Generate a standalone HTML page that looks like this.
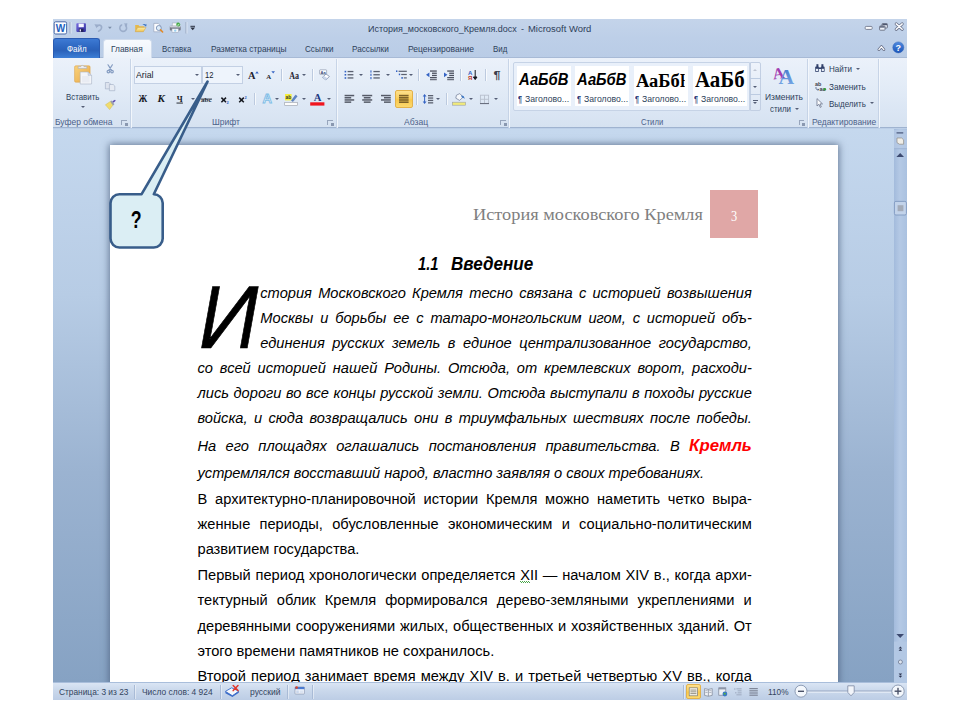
<!DOCTYPE html>
<html lang="ru"><head><meta charset="utf-8"><title>История московского Кремля</title>
<style>
*{box-sizing:border-box;margin:0;padding:0}
html,body{width:960px;height:720px;background:#fff;overflow:hidden}
body{position:relative;font-family:"Liberation Sans",sans-serif;color:#2e3f5b}
body div,body span,body svg,body b{position:absolute}
.ln b,.ln span{position:static}
.t{white-space:pre;transform-origin:0 50%}
.gl{color:#4c6189}
.st{color:#33445e}
#win{left:53px;top:19px;width:854px;height:681px;background:#bccfe8;overflow:hidden}
#title{left:53px;top:19px;width:854px;height:39px;background:linear-gradient(#c4d4ea 0,#bdcfe8 50%,#b9cce6 100%)}
#filetab{left:53px;top:38px;width:46.8px;height:20px;border-radius:3px 3px 0 0;background:linear-gradient(#3d7ad4 0,#2e68c2 40%,#2a61b9 60%,#3c7ed6 100%);border:1px solid #2b5cb2;border-bottom:none}
#hometab{left:102.6px;top:38.6px;width:49.2px;height:19.8px;border-radius:3.5px 3.5px 0 0;background:linear-gradient(#f7fafe,#ecf2fa);border:1px solid #cfdbec;border-bottom:none}
#ribbon{left:53px;top:57px;width:854px;height:71.4px;background:linear-gradient(#ebf1fa 0,#e3ecf7 40%,#dbe6f4 75%,#d6e2f1 100%);border-top:1px solid #a7bad6;border-bottom:1px solid #9fb3d0}
.gsep{top:58.5px;width:2px;height:69px;background:linear-gradient(90deg,#c2d0e4 50%,#f6f9fd 50%);opacity:.85}
.sep{width:1px;background:#bccadf;box-shadow:1px 0 0 rgba(255,255,255,.7)}
.ss{background:#a9bbd6;box-shadow:1px 0 0 rgba(255,255,255,.45)}
.dd{width:0;height:0;border-left:2.3px solid transparent;border-right:2.3px solid transparent;border-top:2.6px solid #555e76}
.launch{width:5.5px;height:5px;border-left:1px solid #97a5bc;border-top:1px solid #97a5bc}
.launch:after{content:"";position:absolute;right:-1px;bottom:-1px;width:2.6px;height:2.6px;background:#8a98b0}
#doc{left:53px;top:129px;width:841px;height:554px;background:linear-gradient(#c5d8ee 0,#b7cce5 30%,#9bb3d1 62%,#86a2c3 100%)}
#page{left:110px;top:145.3px;width:728.2px;height:540px;background:#fff;box-shadow:0 0 7px 1px rgba(72,92,120,.75)}
#scroll{left:894px;top:129px;width:13px;height:554px;background:linear-gradient(90deg,#a3bbdc,#b4c9e5 45%,#aac1e0 100%)}
#status{left:53px;top:682.3px;width:854px;height:17.5px;background:linear-gradient(#dae5f4 0,#cbd9ec 40%,#bccde5 100%);border-top:1px solid #a9bedb}
#textlayer{left:0;top:0;width:960px;height:682.5px;overflow:hidden}
.ln{height:20px;font-size:14.65px;line-height:20px;color:#000;white-space:nowrap;text-align:justify;text-align-last:justify}
.ln.l{text-align:left;text-align-last:left}
.it{font-style:italic}
.kr{color:#ff0000;font-size:16.8px;font-weight:bold;line-height:1}
.wv{background:repeating-linear-gradient(90deg,#4aa84a 0 1px,transparent 1px 2px) 0 14px/100% 1px no-repeat,repeating-linear-gradient(90deg,transparent 0 1px,#4aa84a 1px 2px) 0 15px/100% 1px no-repeat}
.box{background:#eef4fc;border:1px solid #c3d0e4}
.cell{top:66.3px;width:54px;height:39.4px;background:#fff;overflow:hidden}
.cell span{color:#000;white-space:pre}
</style></head><body>
<div id="win"></div>
<div id="title"></div>
<div id="ribbon"></div>
<div id="filetab"></div>
<div id="hometab"></div>
<div class="gsep" style="left:129.5px"></div>
<div class="gsep" style="left:336.3px"></div>
<div class="gsep" style="left:508.4px"></div>
<div class="gsep" style="left:807.3px"></div>
<div class="gsep" style="left:877.8px"></div>
<div class="box" style="left:133.6px;top:66px;width:68.4px;height:17.8px"></div>
<div class="box" style="left:201.5px;top:66px;width:41px;height:17.8px"></div>
<div class="dd" style="left:194.6px;top:74px"></div>
<div class="dd" style="left:235.8px;top:74px"></div>
<div class="dd" style="left:80.5px;top:106px"></div>
<div class="dd" style="left:190.5px;top:98px"></div>
<div class="dd" style="left:302px;top:74px"></div>
<div class="dd" style="left:275.4px;top:98px"></div>
<div class="dd" style="left:302px;top:98px"></div>
<div class="dd" style="left:327.3px;top:98px"></div>
<div class="dd" style="left:359.4px;top:74px"></div>
<div class="dd" style="left:386px;top:74px"></div>
<div class="dd" style="left:409.4px;top:74px"></div>
<div class="dd" style="left:436px;top:98px"></div>
<div class="dd" style="left:468.8px;top:98px"></div>
<div class="dd" style="left:494.2px;top:98px"></div>
<div class="dd" style="left:794.5px;top:108.2px"></div>
<div class="dd" style="left:855.8px;top:67.8px"></div>
<div class="dd" style="left:870.3px;top:102px"></div>
<div class="sep" style="left:281.4px;top:68.5px;height:12.5px"></div>
<div class="sep" style="left:311.8px;top:68.5px;height:12.5px"></div>
<div class="sep" style="left:254.3px;top:93px;height:12px"></div>
<div class="sep" style="left:418.3px;top:68.5px;height:12.5px"></div>
<div class="sep" style="left:460.3px;top:68.5px;height:12.5px"></div>
<div class="sep" style="left:485.2px;top:68.5px;height:12.5px"></div>
<div class="sep" style="left:415.6px;top:93px;height:12px"></div>
<div class="sep" style="left:446.4px;top:93px;height:12px"></div>
<div class="launch" style="left:121px;top:119.8px"></div>
<div class="launch" style="left:327px;top:119.8px"></div>
<div class="launch" style="left:500px;top:119.8px"></div>
<div class="launch" style="left:798.5px;top:119.8px"></div>
<div style="left:395px;top:90px;width:17.6px;height:18px;border-radius:2px;background:linear-gradient(#fde08d,#fbd160 45%,#fac84a 55%,#fbd970);border:1px solid #e3b24a"></div>
<div style="left:513.3px;top:61.8px;width:237px;height:49.4px;background:#e9f0fa;border:1px solid #c6d3e6;border-radius:2px 0 0 2px"></div>
<div class="cell" style="left:516.7px"></div>
<div class="cell" style="left:575.2px"></div>
<div class="cell" style="left:633.8px"></div>
<div class="cell" style="left:692.9px"></div>
<div style="left:749.8px;top:61.8px;width:11.4px;height:49.4px;background:linear-gradient(#eef3fb,#dde7f4);border:1px solid #c2cfe3;border-radius:0 2px 2px 0"></div>
<div style="left:749.8px;top:78.2px;width:11.4px;height:1px;background:#bccbe1"></div>
<div style="left:749.8px;top:94.4px;width:11.4px;height:1px;background:#bccbe1"></div>
<div class="dd" style="left:753.3px;top:69px;transform:rotate(180deg);opacity:.3"></div>
<div class="dd" style="left:753.3px;top:86px"></div>
<div style="left:753.2px;top:100.2px;width:4.8px;height:1px;background:#555e76"></div>
<div class="dd" style="left:753.3px;top:102.4px"></div>

<div id="doc"></div>
<div id="scroll"></div>
<div id="textlayer">
<div id="page"></div>
<div style="left:710.2px;top:189.6px;width:47.7px;height:48.1px;background:#e0a7a6"></div>
<span class="t " style="left:473.3px;top:205.20px;font-size:17.4px;line-height:19.26px;transform:scaleX(1.053);color:#7f7f7f;font-family:'Liberation Serif',serif">История московского Кремля</span>
<span class="t " style="left:730.8px;top:206.98px;font-size:15.4px;line-height:17.05px;transform:scaleX(0.805);color:#fff;font-family:'Liberation Serif',serif">3</span>
<span class="t " style="left:417.5px;top:255.17px;font-size:17.6px;line-height:19.66px;transform:scaleX(0.838);color:#000;font-weight:bold;font-style:italic">1.1</span>
<span class="t " style="left:450.5px;top:255.17px;font-size:17.6px;line-height:19.66px;transform:scaleX(0.971);color:#000;font-weight:bold;font-style:italic">Введение</span>
<span class="t" style="left:198.9px;top:267.50px;font-size:89.5px;line-height:99.97px;font-style:italic;color:#000;-webkit-text-stroke:0.7px #000;transform:scaleX(.925)">И</span>
<div class="ln it" style="left:260.3px;top:282.82px;width:491.5px">стория Московского Кремля тесно связана с историей возвышения</div>
<div class="ln it" style="left:260.3px;top:307.62px;width:491.5px">Москвы и борьбы ее с татаро-монгольским игом, с историей объ-</div>
<div class="ln it" style="left:260.3px;top:332.62px;width:491.5px">единения русских земель в единое централизованное государство,</div>
<div class="ln it" style="left:197.5px;top:358.02px;width:554.3px">со всей историей нашей Родины. Отсюда, от кремлевских ворот, расходи-</div>
<div class="ln it" style="left:197.5px;top:382.72px;width:554.3px">лись дороги во все концы русской земли. Отсюда выступали в походы русские</div>
<div class="ln it" style="left:197.5px;top:408.22px;width:554.3px">войска, и сюда возвращались они в триумфальных шествиях после победы.</div>
<div class="ln it" style="left:197.5px;top:436.22px;width:554.3px">На его площадях оглашались постановления правительства. В <b class="kr">Кремль</b></div>
<div class="ln it l" style="left:197.5px;top:463.02px;width:554.3px">устремлялся восставший народ, властно заявляя о своих требованиях.</div>
<div class="ln" style="left:197.5px;top:489.32px;width:554.3px">В архитектурно-планировочной истории Кремля можно наметить четко выра-</div>
<div class="ln" style="left:197.5px;top:514.32px;width:554.3px">женные периоды, обусловленные экономическим и социально-политическим</div>
<div class="ln l" style="left:197.5px;top:539.32px;width:554.3px">развитием государства.</div>
<div class="ln" style="left:197.5px;top:565.02px;width:554.3px">Первый период хронологически определяется <span class="wv">X</span>II — началом XIV в., когда архи-</div>
<div class="ln" style="left:197.5px;top:590.32px;width:554.3px">тектурный облик Кремля формировался дерево-земляными укреплениями и</div>
<div class="ln" style="left:197.5px;top:615.82px;width:554.3px">деревянными сооружениями жилых, общественных и хозяйственных зданий. От</div>
<div class="ln l" style="left:197.5px;top:641.12px;width:554.3px">этого времени памятников не сохранилось.</div>
<div class="ln" style="left:197.5px;top:666.42px;width:554.3px">Второй период занимает время между XIV в. и третьей четвертью XV вв., когда</div>
</div>
<div id="status"></div>
<div class="sep ss" style="left:134.2px;top:685px;height:13.5px"></div>
<div class="sep ss" style="left:219.6px;top:685px;height:13.5px"></div>
<div class="sep ss" style="left:286.6px;top:685px;height:13.5px"></div>
<div class="sep ss" style="left:312.3px;top:685px;height:13.5px"></div>
<div class="sep ss" style="left:682.6px;top:685px;height:13.5px"></div>
<div style="left:686px;top:684.2px;width:14.6px;height:15.2px;border-radius:2px;background:linear-gradient(#fde08d,#fbd160 45%,#fac84a 55%,#fbd970);border:1px solid #e3b24a"></div>
<svg width="960" height="720" viewBox="0 0 960 720" style="left:0;top:0">
<!-- spell book -->
<path d="M225.4 691.4 l6.2 -3.6 l7.2 3.4 l-6.4 4.6z" fill="#f4f7fc" stroke="#3b6cc8" stroke-width=".9"/>
<path d="M225.4 691.6 l7 3.8 l6.4 -4.2 v1.6 l-6.4 4.2 l-7 -3.8z" fill="#3b6cc8"/>
<path d="M233.2 685.6 l4.8 5 M238 685.6 l-4.8 5" stroke="#e0382c" stroke-width="1.5" stroke-linecap="round"/>
<!-- macro -->
<rect x="295" y="687" width="9.4" height="7" rx=".6" fill="#f4f7fc" stroke="#7c8aa6" stroke-width=".6"/>
<rect x="295" y="687" width="9.4" height="2.2" fill="#4a7ad0"/>
<rect x="296.2" y="690.4" width="2.6" height="2.6" fill="#c9d6ec"/><rect x="299.6" y="690.4" width="3.8" height="2.6" fill="#dbe4f2"/>
<circle cx="296.6" cy="687.6" r="1.3" fill="#d8452f"/>
<!-- view buttons -->
<rect x="689.2" y="687.8" width="8.4" height="8" fill="#f6f4ea" stroke="#7d7a70" stroke-width=".7"/>
<g fill="#8a877c"><rect x="690.4" y="689.6" width="6" height=".9"/><rect x="690.4" y="691.4" width="6" height=".9"/><rect x="690.4" y="693.2" width="6" height=".9"/></g>
<path d="M704.6 688.6 l3.8 .8 l3.8 -.8 v6.8 l-3.8 .8 l-3.8 -.8z" fill="#eef1f6" stroke="#7a8294" stroke-width=".7"/><path d="M708.4 689.4 v6.8" stroke="#7a8294" stroke-width=".7"/>
<g fill="#9aa1b0"><rect x="705.4" y="690.4" width="2.2" height=".7"/><rect x="705.4" y="692" width="2.2" height=".7"/><rect x="709.2" y="690.4" width="2.2" height=".7"/><rect x="709.2" y="692" width="2.2" height=".7"/></g>
<rect x="718.8" y="687.8" width="7" height="7.4" fill="#eef1f6" stroke="#7a8294" stroke-width=".7"/><rect x="718.8" y="687.8" width="7" height="1.6" fill="#8d96a8"/>
<circle cx="724.9" cy="694" r="2.4" fill="#3b78c8"/><path d="M723.6 693.2 c.8 -.8 1.8 -.6 2.4 .2 c-.4 .8 -1.2 1.6 -2 1.2z" fill="#56b04a"/>
<g fill="#9aa6bc"><rect x="736.4" y="688.4" width="5.2" height=".9"/><rect x="737.6" y="690.4" width="4" height=".9"/><rect x="737.6" y="692.4" width="4" height=".9"/><rect x="736.4" y="694.4" width="5.2" height=".9"/><rect x="734.2" y="688.4" width="1.2" height="1.2"/><rect x="735.2" y="692.2" width="1.2" height="1.2"/></g>
<g fill="#7f8798"><rect x="749.4" y="688" width="8.4" height="1.2"/><rect x="749.4" y="690.2" width="8.4" height="1.2"/><rect x="749.4" y="692.4" width="8.4" height="1.2"/><rect x="749.4" y="694.6" width="8.4" height="1.2"/></g>
<!-- zoom slider -->
<rect x="807" y="690.6" width="85" height="1" fill="#8a9ab6"/><rect x="807" y="691.6" width="85" height="1" fill="#eef3fa"/>
<rect x="850.4" y="688" width="1" height="6.4" fill="#7a8aa6"/>
<circle cx="801" cy="691.2" r="6" fill="#f3f7fc" stroke="#8594ae" stroke-width=".9"/><rect x="798" y="690.6" width="6" height="1.4" fill="#4a5268"/>
<circle cx="898" cy="691.2" r="6.2" fill="#f3f7fc" stroke="#8594ae" stroke-width=".9"/><rect x="894.6" y="690.5" width="6.8" height="1.4" fill="#4a5268"/><rect x="897.3" y="687.8" width="1.4" height="6.8" fill="#4a5268"/>
<path d="M847.8 685.8 h6.4 v6.6 l-3.2 3.4 l-3.2 -3.4z" fill="#f2f5fa" stroke="#7b88a2" stroke-width=".8" stroke-linejoin="round"/>
<!-- scrollbar -->
<rect x="896.6" y="132.2" width="6.6" height="1.3" fill="#5b6a8c"/>
<rect x="894" y="130" width="13" height="18.4" fill="#b9cce6" opacity=".6"/>
<rect x="896.6" y="132.2" width="6.6" height="1.3" fill="#5b6a8c"/>
<path d="M897 138 h4.6 l2 1.8 v4.4 h-4.2 l-2.4 -1.6z" fill="#f0eee8" stroke="#8e8a84" stroke-width=".7"/>
<rect x="894" y="148.2" width="13" height="1" fill="#9eb4d4"/>
<path d="M896.4 157 h7.6 l-3.8 -4z" fill="#3c4a70"/>
<rect x="894.4" y="201.4" width="12" height="13.6" rx="1.5" fill="#c2d3ea" stroke="#7f98c0" stroke-width=".9"/>
<rect x="897.6" y="205.2" width="5.8" height="6" fill="#a3abb8"/>
<rect x="894" y="641.6" width="13" height="41.4" fill="#b3c8e4"/>
<path d="M896.4 634 h7.6 l-3.8 4z" fill="#3c4a70"/>
<path d="M898.6 648.4 l1.8 -2 l1.8 2z M898.6 650.8 l1.8 -2 l1.8 2z" fill="#2c3450"/>
<circle cx="900.4" cy="662" r="2" fill="#dfe6f0" stroke="#6d7890" stroke-width=".8"/>
<path d="M898.6 673.4 l1.8 2 l1.8 -2z M898.6 675.8 l1.8 2 l1.8 -2z" fill="#2c3450"/>
</svg>

<span class="t " style="left:66.7px;top:43.97px;font-size:9.2px;line-height:10.28px;transform:scaleX(0.867);color:#fff">Файл</span>
<span class="t " style="left:110.8px;top:43.97px;font-size:9.2px;line-height:10.28px;transform:scaleX(0.907);">Главная</span>
<span class="t " style="left:162.0px;top:43.97px;font-size:9.2px;line-height:10.28px;transform:scaleX(0.858);">Вставка</span>
<span class="t " style="left:210.8px;top:43.97px;font-size:9.2px;line-height:10.28px;transform:scaleX(0.906);">Разметка страницы</span>
<span class="t " style="left:305.3px;top:43.97px;font-size:9.2px;line-height:10.28px;transform:scaleX(0.881);">Ссылки</span>
<span class="t " style="left:352.2px;top:43.97px;font-size:9.2px;line-height:10.28px;transform:scaleX(0.892);">Рассылки</span>
<span class="t " style="left:408.0px;top:43.97px;font-size:9.2px;line-height:10.28px;transform:scaleX(0.930);">Рецензирование</span>
<span class="t " style="left:492.5px;top:43.97px;font-size:9.2px;line-height:10.28px;transform:scaleX(0.860);">Вид</span>
<span class="t " style="left:367.7px;top:23.91px;font-size:9.6px;line-height:10.72px;transform:scaleX(0.936);">История_московского_Кремля.docx</span>
<span class="t " style="left:520.5px;top:23.91px;font-size:9.6px;line-height:10.72px;transform:scaleX(0.937);">-</span>
<span class="t " style="left:528.0px;top:23.91px;font-size:9.6px;line-height:10.72px;transform:scaleX(0.984);">Microsoft Word</span>
<span class="t " style="left:65.6px;top:92.42px;font-size:9.2px;line-height:10.28px;transform:scaleX(0.857);">Вставить</span>
<span class="t gl" style="left:55.0px;top:117.17px;font-size:9.2px;line-height:10.28px;transform:scaleX(0.921);">Буфер обмена</span>
<span class="t " style="left:135.8px;top:70.17px;font-size:9.2px;line-height:10.28px;transform:scaleX(0.952);color:#161e2e">Arial</span>
<span class="t " style="left:204.5px;top:70.17px;font-size:9.2px;line-height:10.28px;transform:scaleX(0.831);color:#161e2e">12</span>
<span class="t gl" style="left:212.0px;top:117.17px;font-size:9.2px;line-height:10.28px;transform:scaleX(0.923);">Шрифт</span>
<span class="t gl" style="left:403.5px;top:117.17px;font-size:9.2px;line-height:10.28px;transform:scaleX(0.935);">Абзац</span>
<span class="t gl" style="left:640.8px;top:117.17px;font-size:9.2px;line-height:10.28px;transform:scaleX(0.839);">Стили</span>
<span class="t " style="left:765.0px;top:92.37px;font-size:9.2px;line-height:10.28px;transform:scaleX(0.917);">Изменить</span>
<span class="t " style="left:770.0px;top:103.67px;font-size:9.2px;line-height:10.28px;transform:scaleX(0.859);">стили</span>
<span class="t " style="left:829.0px;top:64.47px;font-size:9.2px;line-height:10.28px;transform:scaleX(0.877);">Найти</span>
<span class="t " style="left:829.0px;top:81.67px;font-size:9.2px;line-height:10.28px;transform:scaleX(0.891);">Заменить</span>
<span class="t " style="left:829.0px;top:98.67px;font-size:9.2px;line-height:10.28px;transform:scaleX(0.868);">Выделить</span>
<span class="t gl" style="left:811.7px;top:117.17px;font-size:9.2px;line-height:10.28px;transform:scaleX(0.916);">Редактирование</span>
<span class="t st" style="left:58.7px;top:686.86px;font-size:9.0px;line-height:10.05px;transform:scaleX(0.926);">Страница: 3 из 23</span>
<span class="t st" style="left:141.8px;top:686.86px;font-size:9.0px;line-height:10.05px;transform:scaleX(0.935);">Число слов: 4 924</span>
<span class="t st" style="left:249.7px;top:686.86px;font-size:9.0px;line-height:10.05px;transform:scaleX(0.947);">русский</span>
<span class="t st" style="left:767.5px;top:687.46px;font-size:9.0px;line-height:10.05px;transform:scaleX(0.917);">110%</span>
<span class="t " style="left:525.2px;top:94.47px;font-size:9.2px;line-height:10.28px;transform:scaleX(0.941);">Заголово...</span>
<span class="t " style="left:518.3px;top:95.11px;font-size:8.5px;line-height:9.49px;transform:scaleX(0.845);color:#2a3a7a;font-weight:bold">¶</span>
<span class="t " style="left:583.7px;top:94.47px;font-size:9.2px;line-height:10.28px;transform:scaleX(0.941);">Заголово...</span>
<span class="t " style="left:576.8px;top:95.11px;font-size:8.5px;line-height:9.49px;transform:scaleX(0.845);color:#2a3a7a;font-weight:bold">¶</span>
<span class="t " style="left:642.2px;top:94.47px;font-size:9.2px;line-height:10.28px;transform:scaleX(0.941);">Заголово...</span>
<span class="t " style="left:635.3px;top:95.11px;font-size:8.5px;line-height:9.49px;transform:scaleX(0.845);color:#2a3a7a;font-weight:bold">¶</span>
<span class="t " style="left:700.7px;top:94.47px;font-size:9.2px;line-height:10.28px;transform:scaleX(0.941);">Заголово...</span>
<span class="t " style="left:693.8px;top:95.11px;font-size:8.5px;line-height:9.49px;transform:scaleX(0.845);color:#2a3a7a;font-weight:bold">¶</span>
<span class="t " style="left:518.8px;top:69.84px;font-size:16.2px;line-height:18.10px;transform:scaleX(0.915);color:#000;font-weight:bold;font-style:italic">АаБбВ</span>
<span class="t " style="left:577.3px;top:69.84px;font-size:16.2px;line-height:18.10px;transform:scaleX(0.915);color:#000;font-weight:bold;font-style:italic">АаБбВ</span>
<span class="t " style="left:695.0px;top:66.93px;font-size:23.2px;line-height:25.68px;transform:scaleX(0.904);color:#000;font-weight:bold;font-family:'Liberation Serif',serif">АаБб</span>
<span class="t " style="left:636.0px;top:70.76px;font-size:18.9px;line-height:20.92px;transform:scaleX(0.978);color:#000;font-weight:bold;font-family:'Liberation Serif',serif">АаБб</span>
<span class="t " style="left:680.2px;top:70.76px;font-size:18.9px;line-height:20.92px;transform:scaleX(0.777);color:#000;font-weight:bold;font-family:'Liberation Serif',serif;width:5.5px;overflow:hidden">В</span>
<svg width="960" height="720" viewBox="0 0 960 720" style="left:0;top:0" font-family="Liberation Sans, sans-serif">
<defs>
<linearGradient id="gSave" x1="0" y1="0" x2="1" y2="1"><stop offset="0" stop-color="#7a6ee0"/><stop offset="1" stop-color="#2a2a9a"/></linearGradient>
<linearGradient id="gFold" x1="0" y1="0" x2="0" y2="1"><stop offset="0" stop-color="#fdeea5"/><stop offset="1" stop-color="#f0c452"/></linearGradient>
<linearGradient id="gHelp" x1="0" y1="0" x2="0" y2="1"><stop offset="0" stop-color="#4f8ae0"/><stop offset="1" stop-color="#1c55b8"/></linearGradient>
<linearGradient id="gClip" x1="0" y1="0" x2="1" y2="1"><stop offset="0" stop-color="#f9d27c"/><stop offset="1" stop-color="#e8a94a"/></linearGradient>
<linearGradient id="gBigA" x1="0" y1="0" x2="0" y2="1"><stop offset="0" stop-color="#3f74c8"/><stop offset="1" stop-color="#7fb0ea"/></linearGradient>
</defs>
<!-- QAT -->
<g id="qat">
<rect x="54.2" y="21.8" width="12.4" height="12.2" rx="1.5" fill="#fdfeff" stroke="#4a6aa8" stroke-width="1"/>
<text x="60.4" y="31.6" font-size="10.5" font-weight="bold" fill="#1b5fc0" text-anchor="middle" textLength="9.5" lengthAdjust="spacingAndGlyphs">W</text>
<rect x="69.6" y="22" width="1" height="11.5" fill="#98a5bd"/><rect x="70.6" y="22" width="1" height="11.5" fill="#dce6f3"/>
<rect x="76.3" y="23.2" width="9.6" height="8.7" rx="0.8" fill="url(#gSave)"/>
<rect x="78.6" y="23.6" width="5.2" height="3.6" fill="#f4f6ff"/>
<rect x="78.9" y="28.6" width="4.6" height="3.3" fill="#23235a"/><rect x="79.6" y="29.3" width="1.4" height="2.2" fill="#e8e8f8"/>
<path d="M97 26.4 C99.8 23.8 102.4 25.8 101.3 28.6 C100.7 30 99.6 30.8 98.6 31.2" stroke="#9badca" stroke-width="1.6" fill="none" stroke-linecap="round"/><path d="M94.4 24.2 L98 24.6 L96.6 28.2 Z" fill="#9badca"/>
<path d="M108 26.7 h3.8 l-1.9 2.3z" fill="#7d8ea9"/>
<path d="M121.6 25 A3.4 3.4 0 1 0 125.6 25.6" stroke="#9badca" stroke-width="1.6" fill="none" stroke-linecap="round"/><path d="M123.8 23.6 L127.4 23.2 L126.8 27 Z" fill="#9badca"/>
<path d="M135.2 31.6 V25 h3.2 l1 1.2 h4.6 v1.6 h-6.4 l-2.4 3.8z" fill="#e6b94a"/>
<path d="M135.2 31.7 l2.6 -4.3 h8.2 l-2.6 4.3z" fill="url(#gFold)" stroke="#c9962e" stroke-width=".4"/>
<path d="M142.4 25 c1.2 -1.4 2.6 -1.4 3.4 -.4 l.6 -.8 v2.4 h-2.2 l.7 -.8 c-.6 -.6 -1.4 -.6 -2.5 -.4z" fill="#3f78c4"/>
<path d="M153.8 23.4 h4.4 l1.9 1.9 v6.5 h-6.3z" fill="#fbfcfe" stroke="#8e9bb3" stroke-width=".6"/>
<circle cx="158.8" cy="28" r="2.5" fill="#dcecfa" stroke="#6f87ad" stroke-width=".8"/>
<path d="M160.6 29.9 l2 2.1" stroke="#e08a2a" stroke-width="1.6" stroke-linecap="round"/>
<rect x="172.2" y="23" width="6" height="3.4" fill="#fbfcfe" stroke="#9aa3b5" stroke-width=".5"/>
<rect x="169.8" y="25.8" width="10.9" height="4.8" rx="1" fill="#747884"/>
<rect x="169.8" y="25.8" width="10.9" height="1.6" rx=".8" fill="#c9ccd6"/>
<rect x="172" y="28.8" width="6.4" height="3.4" fill="#f6f9fd" stroke="#9aa3b5" stroke-width=".5"/>
<circle cx="175.2" cy="30.6" r="1.2" fill="#9ad0f0"/>
<circle cx="178.2" cy="24.6" r="2" fill="#43a943"/><path d="M177.1 24.6 l.8 .9 l1.4 -1.7" stroke="#fff" stroke-width=".7" fill="none"/>
<rect x="185.5" y="22" width="1" height="11.5" fill="#98a5bd"/><rect x="186.5" y="22" width="1" height="11.5" fill="#dce6f3"/>
<rect x="190.4" y="25.8" width="4.6" height="1" fill="#2a3040"/><path d="M190.3 27.6 h4.8 l-2.4 2.6z" fill="#2a3040"/>
</g>
<!-- window controls -->
<g id="wc">
<rect x="865.2" y="26.4" width="7" height="3" rx="1" fill="#fbfcfe" stroke="#70788c" stroke-width=".9"/>
<rect x="882" y="23.6" width="5.4" height="4.4" rx=".6" fill="#e6ecf6" stroke="#646c80" stroke-width=".9"/><rect x="882.4" y="23.8" width="4.6" height="1.4" fill="#4e5870"/>
<rect x="879.6" y="26" width="5.4" height="4.2" rx=".6" fill="#eef2f9" stroke="#646c80" stroke-width=".9"/><rect x="880" y="26.3" width="4.6" height="1.3" fill="#4e5870"/>
<path d="M896.2 23.9 l6 5.4 M902.2 23.9 l-6 5.4" stroke="#687088" stroke-width="3" stroke-linecap="round"/>
<path d="M896.2 23.9 l6 5.4 M902.2 23.9 l-6 5.4" stroke="#fbfcfe" stroke-width="1.5" stroke-linecap="round"/>
<path d="M878.9 49.6 l2.5 -3 l2.5 3" stroke="#687088" stroke-width="2.8" fill="none" stroke-linecap="round" stroke-linejoin="round"/>
<path d="M878.9 49.6 l2.5 -3 l2.5 3" stroke="#fbfcfe" stroke-width="1.3" fill="none" stroke-linecap="round" stroke-linejoin="round"/>
<circle cx="898.3" cy="47.4" r="5.5" fill="url(#gHelp)" stroke="#2f62b8" stroke-width=".5"/>
<text x="898.3" y="50.7" font-size="9" font-weight="bold" fill="#fff" text-anchor="middle">?</text>
</g>
<!-- clipboard -->
<g id="clip">
<rect x="74.6" y="65.8" width="15.5" height="16.4" rx="1.2" fill="url(#gClip)" stroke="#d99a3c" stroke-width=".5"/>
<path d="M78.2 68.4 v-1.8 h2.6 c.2 -1.6 3 -1.6 3.2 0 h2.8 v1.8z" fill="#eef0f4" stroke="#9aa0ae" stroke-width=".5"/>
<path d="M80.2 72 h7.8 l3.6 3.4 v8.6 h-11.4z" fill="#f3f5f9" stroke="#aab3c4" stroke-width=".6"/>
<path d="M88 72 v3.4 h3.6z" fill="#d4dbe7" stroke="#aab3c4" stroke-width=".4"/>
<rect x="82" y="76" width="7.6" height="6.4" fill="#e6eaf1" opacity=".8"/>
<g stroke="#869dc2" stroke-width="1.2" fill="none" stroke-linecap="round"><path d="M108 64.8 l3.6 5.6 M112.4 64.8 l-3.6 5.6"/><circle cx="108.4" cy="71.6" r="1.3"/><circle cx="112" cy="71.6" r="1.3"/></g>
<path d="M105.4 82.5 h3.6 l1.4 1.4 v5 h-5z" fill="#dde3ee" stroke="#9eabc2" stroke-width=".6"/>
<path d="M109.4 84.5 h3.8 l1.6 1.6 v4.6 h-5.4z" fill="#e6ebf3" stroke="#9eabc2" stroke-width=".6"/>
<path d="M105.4 104.8 l5 -3.4 l2.6 3.6 l-3.4 4.6 z" fill="#f0dc6e" stroke="#c9b040" stroke-width=".4"/>
<path d="M110.2 101.6 l1.6 -1 l2.6 3.6 l-1.4 1.2z" fill="#9a9eaa"/>
<path d="M112.4 101.2 l2.6 -1.5 l.7 1.1 l-2.2 1.9z" fill="#5a48b0"/>
</g>
<!-- font row 1 -->
<g id="font1" font-family="Liberation Serif, serif">
<text x="248" y="78.8" font-size="10.4" font-weight="bold" fill="#1f2430">A</text>
<path d="M255.2 73.6 l1.8 -2.4 l1.8 2.4z" fill="#3463c4"/>
<text x="266.2" y="78.8" font-size="6.8" font-weight="bold" fill="#1f2430">A</text>
<path d="M271.4 71.2 h3.6 l-1.8 2.4z" fill="#3463c4"/>
<text x="289.2" y="78.8" font-size="9.4" font-weight="bold" fill="#1f2430" textLength="9.8" lengthAdjust="spacingAndGlyphs">Aa</text>
<rect x="319.6" y="69.8" width="7" height="4.6" rx=".6" fill="#f8fafd" stroke="#7f8ba3" stroke-width=".6"/>
<text x="320.6" y="73.8" font-size="4" font-family="Liberation Sans, sans-serif" font-weight="bold" fill="#3a4a78">Aa</text>
<path d="M322.4 77.4 l3.6 -3.4 l3.4 2.4 l-3.4 3.6 z" fill="#fdfdff" stroke="#6f7f9f" stroke-width=".7"/>
<path d="M322.4 77.4 l1.6 -1.5 l3.4 2.4 l-1.4 1.7z" fill="#c7d4ea"/>
</g>
<!-- font row 2 -->
<g id="font2">
<text x="138.6" y="102.4" font-size="9.4" font-weight="bold" fill="#15181f" font-family="Liberation Serif, serif" textLength="8.8" lengthAdjust="spacingAndGlyphs">Ж</text>
<text x="157.6" y="102.4" font-size="9.4" font-weight="bold" font-style="italic" fill="#15181f" font-family="Liberation Serif, serif" textLength="7.4" lengthAdjust="spacingAndGlyphs">К</text>
<text x="176.7" y="102" font-size="9" font-weight="bold" fill="#15181f" font-family="Liberation Serif, serif" textLength="5.9" lengthAdjust="spacingAndGlyphs">Ч</text>
<rect x="176.5" y="102.6" width="6.4" height=".9" fill="#15181f"/>
<text x="201" y="101.6" font-size="6.6" font-weight="bold" fill="#2a2f3a" font-family="Liberation Serif, serif" textLength="10.6" lengthAdjust="spacingAndGlyphs">abc</text>
<rect x="200.6" y="98.6" width="11.4" height=".8" fill="#2a2f3a"/>
<path d="M221.4 97.6 l4.6 4.6 M226 97.6 l-4.6 4.6" stroke="#15181f" stroke-width="1.5"/>
<text x="226.6" y="103.6" font-size="4" font-weight="bold" fill="#3463c4">2</text>
<path d="M239.2 97.6 l4.6 4.6 M243.8 97.6 l-4.6 4.6" stroke="#15181f" stroke-width="1.5"/>
<text x="244.6" y="98.6" font-size="4" font-weight="bold" fill="#3463c4">2</text>
<text x="267.2" y="103.4" font-size="12.6" font-weight="bold" fill="#f4fafe" stroke="#7fbde6" stroke-width=".9" text-anchor="middle" textLength="9.4" lengthAdjust="spacingAndGlyphs">A</text>
<rect x="285" y="94" width="6.6" height="6.4" fill="#f4ef3e"/>
<text x="285.4" y="99.4" font-size="5.4" font-weight="bold" fill="#3a3a2a" textLength="5.8" lengthAdjust="spacingAndGlyphs">ab</text>
<path d="M291.4 100.6 l4.2 -5.6 l1.6 1.2 l-4.2 5.4z" fill="#5d86c8" stroke="#3a5a98" stroke-width=".4"/>
<rect x="284.7" y="102.5" width="12.8" height="2.8" fill="#fcfcfc" stroke="#9a9fa8" stroke-width=".6"/>
<text x="317.7" y="101.2" font-size="10.6" font-weight="bold" fill="#1f3a82" font-family="Liberation Serif, serif" text-anchor="middle">A</text>
<rect x="310.2" y="102.3" width="14.2" height="3.3" fill="#f0141e"/>
</g>

<!-- paragraph row 1 -->
<g id="para1">
<g fill="#3463c4"><rect x="344.6" y="70.8" width="1.6" height="1.6"/><rect x="344.6" y="74" width="1.6" height="1.6"/><rect x="344.6" y="77.2" width="1.6" height="1.6"/></g>
<g fill="#5b6170"><rect x="347.6" y="70.9" width="5.8" height="1.3"/><rect x="347.6" y="74.1" width="5.8" height="1.3"/><rect x="347.6" y="77.3" width="5.8" height="1.3"/></g>
<g fill="#3463c4"><rect x="370.4" y="70.4" width="1.1" height="2.2"/><rect x="370.4" y="73.7" width="1.1" height="2.2"/><rect x="370.4" y="77" width="1.1" height="2.2"/></g>
<g fill="#5b6170"><rect x="373.4" y="70.9" width="6.4" height="1.3"/><rect x="373.4" y="74.1" width="6.4" height="1.3"/><rect x="373.4" y="77.3" width="6.4" height="1.3"/></g>
<g fill="#3463c4"><rect x="396" y="70.4" width="1.4" height="1.6"/><rect x="398.8" y="73.6" width="1.4" height="1.6"/><rect x="401.4" y="77" width="1.4" height="1.8"/></g>
<g fill="#5b6170"><rect x="398.6" y="70.7" width="8.2" height="1.2"/><rect x="401.2" y="73.9" width="5.6" height="1.2"/><rect x="403.8" y="77.3" width="3" height="1.2"/></g>
<g fill="#4d5260"><rect x="430" y="70.4" width="6.8" height="1.3"/><rect x="432" y="72.6" width="4.8" height="1.3"/><rect x="432" y="74.8" width="4.8" height="1.3"/><rect x="430" y="77" width="6.8" height="1.3"/><rect x="430" y="79.2" width="6.8" height="1"/></g>
<path d="M426 74.8 l3.4 -2.4 v4.8z" fill="#3463c4"/>
<g fill="#4d5260"><rect x="447.2" y="70.4" width="6.8" height="1.3"/><rect x="449.2" y="72.6" width="4.8" height="1.3"/><rect x="449.2" y="74.8" width="4.8" height="1.3"/><rect x="447.2" y="77" width="6.8" height="1.3"/><rect x="447.2" y="79.2" width="6.8" height="1"/></g>
<path d="M447.4 74.8 l-3.4 -2.4 v4.8z" fill="#3463c4"/>
<text x="468" y="74.6" font-size="6" font-weight="bold" fill="#2f5fc0">А</text>
<text x="468" y="80.4" font-size="6" font-weight="bold" fill="#c0392b">Я</text>
<path d="M475.2 70 v8.4 M473.4 77 l1.8 2.6 l1.8 -2.6z" stroke="#15181f" stroke-width="1" fill="#15181f"/>
<text x="493.6" y="78.8" font-size="10.4" font-weight="bold" fill="#3a3f4c" textLength="7" lengthAdjust="spacingAndGlyphs">¶</text>
</g>
<!-- paragraph row 2 -->
<g id="para2">
<g fill="#565b68"><rect x="344.6" y="94.8" width="9.6" height="1.5"/><rect x="344.6" y="97" width="6.6" height="1.5"/><rect x="344.6" y="99.2" width="9.6" height="1.5"/><rect x="344.6" y="101.4" width="6.6" height="1.5"/></g>
<g fill="#565b68"><rect x="362.2" y="94.8" width="10" height="1.5"/><rect x="363.8" y="97" width="6.8" height="1.5"/><rect x="362.2" y="99.2" width="10" height="1.5"/><rect x="363.8" y="101.4" width="6.8" height="1.5"/></g>
<g fill="#565b68"><rect x="381" y="94.8" width="9.8" height="1.5"/><rect x="384" y="97" width="6.8" height="1.5"/><rect x="381" y="99.2" width="9.8" height="1.5"/><rect x="384" y="101.4" width="6.8" height="1.5"/></g>
<g fill="#7d6228"><rect x="399" y="94.8" width="9.6" height="1.6"/><rect x="399" y="97" width="9.6" height="1.6"/><rect x="399" y="99.2" width="9.6" height="1.6"/><rect x="399" y="101.4" width="9.6" height="1.6"/></g>
<path d="M424.6 94 l1.9 2.6 h-3.8z M424.6 104 l1.9 -2.6 h-3.8z" fill="#3463c4"/><rect x="424.1" y="96" width="1" height="6" fill="#3463c4"/>
<g fill="#5b6170"><rect x="428" y="95" width="5.2" height="1.3"/><rect x="428" y="97.4" width="5.2" height="1.3"/><rect x="428" y="99.8" width="5.2" height="1.3"/><rect x="428" y="102.2" width="5.2" height="1.3"/></g>
<path d="M456.4 95.2 l3.4 -1.6 l3.4 3.4 l-3.6 3.4 l-3.8 -2.2z" fill="#f4f7fb" stroke="#6b7894" stroke-width=".7"/>
<path d="M461 95.6 c2 -.2 3.6 1 3.6 3.4 c-.8 -1 -1.6 -1.4 -2.6 -1.2z" fill="#3f78c4"/>
<rect x="452.3" y="102.2" width="13.4" height="3" fill="#f1ea7a" stroke="#9a9fa8" stroke-width=".6"/>
<g stroke="#b7bfcd" stroke-width=".9" fill="none"><rect x="480.4" y="95.2" width="8.2" height="8.2"/><path d="M484.5 95.2 v8.2 M480.4 99.3 h8.2"/></g><rect x="480" y="103" width="9" height="1.1" fill="#6a7080"/>
</g>
<!-- styles / editing -->
<g id="styles">
<text x="772.6" y="78.6" font-size="16" font-weight="bold" fill="#a23cb0" font-family="Liberation Serif, serif" transform="rotate(-8 779 72)">A</text>
<text x="778.4" y="84" font-size="21" font-weight="bold" fill="url(#gBigA)" font-family="Liberation Serif, serif" textLength="15.6" lengthAdjust="spacingAndGlyphs">A</text>
<g fill="#30406a"><rect x="815.2" y="66.6" width="3.6" height="5.4" rx=".8"/><rect x="821" y="66.6" width="3.6" height="5.4" rx=".8"/><rect x="816.4" y="64.2" width="2" height="3"/><rect x="821.4" y="64.2" width="2" height="3"/><rect x="818.4" y="67.4" width="3" height="1.6"/></g>
<rect x="815.9" y="68.8" width="2.2" height="2.4" fill="#e8eef8"/><rect x="821.7" y="68.8" width="2.2" height="2.4" fill="#e8eef8"/>
<text x="815" y="85.6" font-size="5.4" font-weight="bold" fill="#3a3f4c">ab</text>
<text x="819.4" y="90.6" font-size="5.4" font-weight="bold" fill="#3a3f4c">ac</text>
<path d="M816 87 c-.4 2 .6 3 2.6 2.8" stroke="#4d5a78" stroke-width=".8" fill="none"/><path d="M817.8 88.6 l1.6 1.2 l-1.8 .8z" fill="#4d5a78"/>
<circle cx="824.8" cy="89.2" r="1.3" fill="#38a038"/>
<path d="M817 98.6 v7.4 l1.9 -1.7 l1.3 3.1 l1.1 -.5 l-1.3 -3 h2.5z" fill="#fbfcfe" stroke="#5c6680" stroke-width=".7" stroke-linejoin="round"/>
</g>

<!--MOREICONS-->
</svg>

<svg width="960" height="720" viewBox="0 0 960 720" style="left:0;top:0">
<path d="M119.4 194.2 H141.6 L207.6 81.5 L153.8 194.2 H153.8 A8.9 8.9 0 0 1 162.7 203.1 V238.6 A8.9 8.9 0 0 1 153.8 247.5 H119.4 A8.9 8.9 0 0 1 110.5 238.6 V203.1 A8.9 8.9 0 0 1 119.4 194.2 Z" fill="#dbeef4" stroke="#385d8a" stroke-width="2.6" stroke-linejoin="round"/>
<text x="136.3" y="228.4" font-family="Liberation Sans, sans-serif" font-weight="bold" font-size="24" fill="#000" text-anchor="middle" transform="translate(136.3 0) scale(0.74 1) translate(-136.3 0)">?</text>
</svg>

</body></html>
